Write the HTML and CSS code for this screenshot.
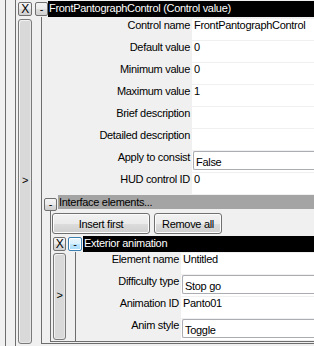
FILE: index.html
```html
<!DOCTYPE html>
<html lang="en">
<head>
  <meta charset="UTF-8">
  <title>FrontPantographControl</title>
  <link rel="stylesheet" href="styles.css">
</head>
<body>
  <div class="frame">
    <div class="frame-inner">

      <!-- Control value block -->
      <div class="ctl">
        <div class="ctl-head">
          <button class="sq sq-x">X</button>
          <button class="sq sq-min">-</button>
          <div class="title">FrontPantographControl (Control value)</div>
        </div>
        <div class="ctl-body">
          <div class="expander">&gt;</div>
          <div class="panel">
            <div class="props">
              <div class="lbl">Control name</div>
              <div class="val">FrontPantographControl</div>
              <div class="lbl">Default value</div>
              <div class="val">0</div>
              <div class="lbl">Minimum value</div>
              <div class="val">0</div>
              <div class="lbl">Maximum value</div>
              <div class="val">1</div>
              <div class="lbl">Brief description</div>
              <div class="val"></div>
              <div class="lbl">Detailed description</div>
              <div class="val"></div>
              <div class="lbl">Apply to consist</div>
              <div class="val"><div class="combo">False</div></div>
              <div class="lbl">HUD control ID</div>
              <div class="val">0</div>
            </div>

            <!-- Interface elements group -->
            <div class="group">
              <div class="group-head">
                <button class="sq sq-min">-</button>
                <div class="group-title">Interface elements...</div>
              </div>
              <div class="group-body">
                <div class="actions">
                  <button class="btn btn-insert">Insert first</button>
                  <button class="btn btn-remove">Remove all</button>
                </div>

                <div class="ctl ctl-nested">
                  <div class="ctl-head">
                    <button class="sq sq-x">X</button>
                    <button class="sq sq-min focused">-</button>
                    <div class="title">Exterior animation</div>
                  </div>
                  <div class="ctl-body">
                    <div class="expander">&gt;</div>
                    <div class="panel">
                      <div class="props">
                        <div class="lbl">Element name</div>
                        <div class="val">Untitled</div>
                        <div class="lbl">Difficulty type</div>
                        <div class="val"><div class="combo">Stop go</div></div>
                        <div class="lbl">Animation ID</div>
                        <div class="val">Panto01</div>
                        <div class="lbl">Anim style</div>
                        <div class="val"><div class="combo">Toggle</div></div>
                      </div>
                    </div>
                  </div>
                </div>
              </div>
            </div>
          </div>
        </div>
      </div>

    </div>
  </div>
</body>
</html>
```

FILE: styles.css
```css
/* WinForms-ish look */
body {
  margin: 0;
  height: 346px;
  overflow: hidden;
  background: #f0f0f0;
  font-family: "Liberation Sans", Arial, sans-serif;
  font-size: 11px;
  line-height: 13px;
  letter-spacing: -0.3px;
  color: #000;
}

.frame {
  margin-left: 5px;
  padding-left: 9px;
  height: 346px;
  border-left: 1px solid #6d6d6d;
}

.frame-inner {
  height: 346px;
  padding-left: 1px;
  border-left: 1px solid #6d6d6d;
}

/* control block: header + body */
.ctl {
  padding-top: 1px;
}

.ctl-head {
  display: flex;
  align-items: center;
  height: 16px;
}

.title {
  flex: 1;
  height: 16px;
  padding-left: 1px;
  background: #000;
  color: #fff;
  white-space: nowrap;
  overflow: hidden;
  line-height: 15px;
}

.ctl-body {
  display: flex;
}

.panel {
  flex: 1;
  border-left: 1px solid #6d6d6d;
  border-bottom: 1px solid #6d6d6d;
}

/* small square buttons */
button {
  font-family: inherit;
  font-size: 11px;
  letter-spacing: inherit;
  color: #000;
  padding: 0;
  margin: 0;
  cursor: pointer;
}

.sq {
  height: 14px;
  border: 1px solid #707070;
  border-radius: 2px;
  background: linear-gradient(#f4f4f4 0%, #ebebeb 50%, #dddddd 51%, #d0d0d0 100%);
  line-height: 11px;
  text-align: center;
}

.sq-x {
  width: 14px;
  margin-left: 1px;
  font-size: 12px;
}

.sq-min {
  width: 13px;
  margin-left: 3px;
  margin-right: 0;
}

.sq-min.focused {
  width: 14px;
  border-color: #3c7fb1;
  background: linear-gradient(#eaf6fd 0%, #d9f0fc 50%, #bee6fd 51%, #a7d9f5 100%);
  box-shadow: inset 0 0 0 1px #ffffff;
}

/* expand bar on the left */
.expander {
  width: 12px;
  margin-top: 2px;
  margin-left: 1px;
  margin-right: 9px;
  border: 1px solid #7a7a7a;
  border-radius: 3px;
  background: #d9d9d9;
  box-shadow: inset 1px 1px 0 #f2f2f2, inset -1px -1px 0 #e6e6e6;
  display: flex;
  align-items: center;
  justify-content: center;
  padding-bottom: 2px;
  box-sizing: content-box;
}

/* property grid */
.props {
  display: grid;
  grid-template-columns: 150px 1fr;
  grid-auto-rows: 21px;
  row-gap: 1px;
  padding-top: 2px;
  padding-bottom: 1px;
}

.lbl {
  text-align: right;
  padding-right: 2px;
  white-space: nowrap;
}

.val {
  background: #fff;
  padding-left: 2px;
  white-space: nowrap;
  overflow: hidden;
}

.val:has(.combo) {
  padding-left: 1px;
}

.combo {
  height: 19px;
  margin-right: -10px;
  border: 1px solid #abadb3;
  border-right: none;
  border-radius: 2px 0 0 2px;
  padding: 4px 0 0 2px;
  box-sizing: border-box;
  background: #fff;
}

/* interface elements group */
.group {
  margin-bottom: 1px;
}

.group-head {
  display: flex;
  align-items: flex-start;
  height: 16px;
}

.group-head .sq-min {
  margin-left: 2px;
  margin-top: 3px;
  height: 13px;
}

.group-title {
  flex: 1;
  height: 14px;
  margin-left: 1px;
  padding-left: 1px;
  padding-top: 1px;
  box-sizing: border-box;
  background: #a4a4a4;
  white-space: nowrap;
}

.group-body {
  margin-left: 8px;
  border-left: 1px solid #6d6d6d;
  border-bottom: 1px solid #6d6d6d;
}

.actions {
  display: flex;
  gap: 4px;
  padding: 2px 0 0 1px;
}

.btn {
  height: 21px;
  border: 1px solid #707070;
  border-radius: 3px;
  background: linear-gradient(#f2f2f2 0%, #ebebeb 50%, #dddddd 51%, #cfcfcf 100%);
  box-shadow: inset 0 0 0 1px #fcfcfc;
}

.btn-insert {
  width: 98px;
}

.btn-remove {
  width: 68px;
}

/* nested element block */
.ctl-nested {
  padding-top: 2px;
}

.ctl-nested .sq-x {
  width: 13px;
  margin-left: 2px;
}

.ctl-nested .sq-min {
  margin-left: 2px;
}

.ctl-nested .title {
  margin-left: 1px;
}

.ctl-nested .expander {
  width: 11px;
  margin-left: 2px;
  margin-top: 1px;
  margin-bottom: 1px;
}

.ctl-nested .panel {
  border-bottom: none;
  padding-bottom: 1px;
}

.ctl-nested .props {
  grid-template-columns: 105px 1fr;
  padding-top: 1px;
  padding-bottom: 0;
}
```
